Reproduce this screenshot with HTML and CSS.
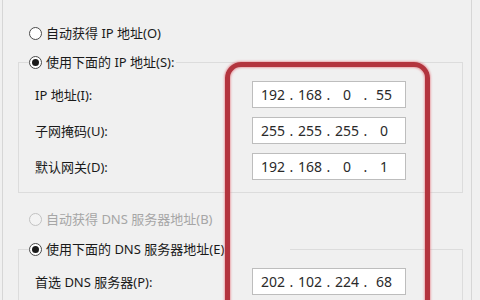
FILE: index.html
```html
<!DOCTYPE html>
<html lang="zh-CN">
<head>
<meta charset="UTF-8">
<title>Internet 协议版本 4 (TCP/IPv4) 属性</title>
<link rel="stylesheet" href="styles.css">
</head>
<body>

<div class="window">
    <div class="content">
        <label class="option"><span class="radio"></span>自动获得 IP 地址(O)</label>

        <fieldset class="group">
            <legend class="option"><span class="radio checked"></span>使用下面的 IP 地址(S):</legend>
            <div class="row">
                <span class="label">IP 地址(I):</span>
                <div class="ip"><span>192</span><i>.</i><span>168</span><i>.</i><span>0</span><i>.</i><span>55</span></div>
            </div>
            <div class="row">
                <span class="label">子网掩码(U):</span>
                <div class="ip"><span>255</span><i>.</i><span>255</span><i>.</i><span>255</span><i>.</i><span>0</span></div>
            </div>
            <div class="row">
                <span class="label">默认网关(D):</span>
                <div class="ip"><span>192</span><i>.</i><span>168</span><i>.</i><span>0</span><i>.</i><span>1</span></div>
            </div>
        </fieldset>

        <label class="option disabled"><span class="radio"></span>自动获得 DNS 服务器地址(B)</label>

        <fieldset class="group">
            <legend class="option wide"><span class="radio checked"></span>使用下面的 DNS 服务器地址(E):</legend>
            <div class="row">
                <span class="label">首选 DNS 服务器(P):</span>
                <div class="ip"><span>202</span><i>.</i><span>102</span><i>.</i><span>224</span><i>.</i><span>68</span></div>
            </div>
        </fieldset>
    </div>

    <!-- red annotation drawn over the address fields -->
    <div class="highlight"></div>
</div>

</body>
</html>
```

FILE: styles.css
```css
/* Page */
body {
    margin: 0;
    background: #f0f0f0;
    color: #1a1a1a;
    font-family: "Noto Sans", "Noto Sans CJK SC", sans-serif;
    font-size: 13px;
    overflow: hidden;
}
.window {
    position: relative;
    margin-left: 2px;
    width: 470px;
    height: 300px;
    box-sizing: border-box;
    overflow: hidden;
    border-left: 1px solid #d6d6d6;
    border-right: 1px solid #d6d6d6;
}
.content {
    padding: 25px 0 0 15px;
}

/* Radio options */
.option {
    display: flex;
    align-items: center;
    gap: 4px;
    height: 16px;
    line-height: 16px;
    padding-left: 11px;
    white-space: nowrap;
}
.radio {
    width: 13px;
    height: 13px;
    box-sizing: border-box;
    border: 1px solid #4a4a4a;
    border-radius: 50%;
    background: #fff;
    display: flex;
    align-items: center;
    justify-content: center;
}
.radio.checked::after {
    content: "";
    width: 7px;
    height: 7px;
    border-radius: 50%;
    background: #1a1a1a;
}
.disabled {
    color: #a6a6a6;
    margin-top: 18px;
}
.disabled .radio {
    border-color: #c2c2c2;
    background: #f3f3f3;
}

/* Group boxes */
.group {
    width: 445px;
    box-sizing: border-box;
    margin: 13px 0 0 0;
    padding: 11px 0 12px 10px;
    border: 1px solid #dcdcdc;
}
.group legend.option {
    padding: 0 2px 0 0;
}
.group legend.wide {
    width: 261px;
    box-sizing: border-box;
}
.disabled + .group {
    margin-top: 14px;
}

/* Label + address rows */
.row {
    display: flex;
    align-items: center;
    height: 27px;
    padding-left: 6px;
    margin-bottom: 9px;
}
.row:last-child {
    margin-bottom: 0;
}
.label {
    width: 217px;
    line-height: 16px;
    white-space: nowrap;
}
.ip {
    display: flex;
    align-items: center;
    width: 154px;
    height: 27px;
    box-sizing: border-box;
    padding-left: 5px;
    background: #fff;
    border: 1px solid #bdbdbd;
    font-size: 14px;
    color: #2a2a2a;
}
.ip span {
    width: 30px;
    text-align: center;
}
.ip i {
    width: 7px;
    font-style: normal;
    text-align: center;
}

/* Annotation */
.highlight {
    position: absolute;
    left: 222px;
    top: 62px;
    width: 205px;
    height: 260px;
    box-sizing: border-box;
    border: 5px solid #b3343e;
    border-radius: 16px;
    box-shadow: 0 0 2px 1px rgba(230, 120, 130, 0.6), inset 0 0 2px 1px rgba(230, 120, 130, 0.6);
}
```
